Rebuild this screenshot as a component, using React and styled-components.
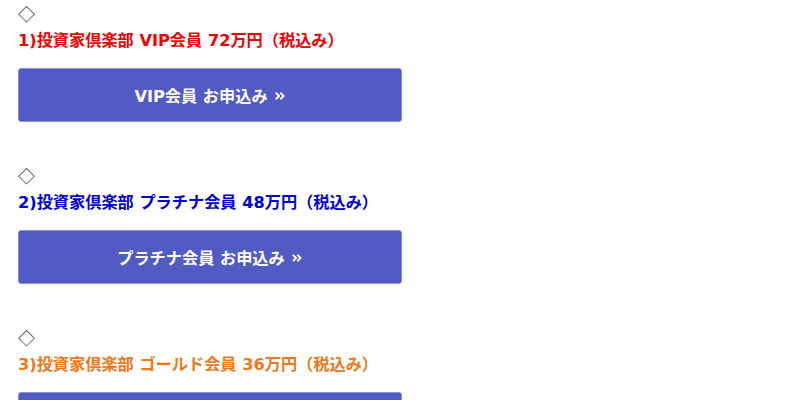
import React from "react";
import styled, { createGlobalStyle } from "styled-components";
import { FaAngleDoubleRight } from "react-icons/fa";

const Global = createGlobalStyle`
  html, body { margin: 0; padding: 0; background: #fff; }
  body {
    font-family: "DejaVu Sans", "Noto Sans CJK JP", sans-serif;
    color: #333;
  }
`;

const Page = styled.div`
  padding: 0 18px;
  width: 384px;
`;

const Plan = styled.section`
  display: flex;
  flex-direction: column;
  padding-bottom: 40px;
`;

const Mark = styled.div`
  font-size: 17px;
  line-height: 27px;
  color: #222;
  font-family: "Noto Sans CJK JP", sans-serif;
`;

const Heading = styled.div`
  font-size: 16.2px;
  line-height: 27px;
  font-weight: 700;
  color: ${(p) => p.$tone};
  font-family: "DejaVu Sans", "Noto Sans CJK JP", sans-serif;
`;

const Apply = styled.a`
  margin-top: 14px;
  height: 54px;
  box-sizing: border-box;
  display: flex;
  align-items: center;
  justify-content: center;
  gap: 6px;
  background: #525bc4;
  border: 1px solid #8a90d8;
  border-radius: 3px;
  color: #fff;
  font-size: 16.2px;
  font-weight: 700;
  text-decoration: none;
  font-family: "DejaVu Sans", "Noto Sans CJK JP", sans-serif;
  svg { width: 12px; height: 12px; margin-top: 2px; }
`;

const plans = [
  { n: 1, name: "VIP会員", price: "72万円", tone: "#f00000" },
  { n: 2, name: "プラチナ会員", price: "48万円", tone: "#0000d0" },
  { n: 3, name: "ゴールド会員", price: "36万円", tone: "#f07818" },
];

export default function App() {
  return (
    <>
      <Global />
      <Page>
        {plans.map((p) => (
          <Plan key={p.n}>
            <Mark>◇</Mark>
            <Heading $tone={p.tone}>
              {p.n})投資家倶楽部 {p.name} {p.price}（税込み）
            </Heading>
            <Apply href="#">
              <span>{p.name} お申込み</span>
              <FaAngleDoubleRight />
            </Apply>
          </Plan>
        ))}
      </Page>
    </>
  );
}
